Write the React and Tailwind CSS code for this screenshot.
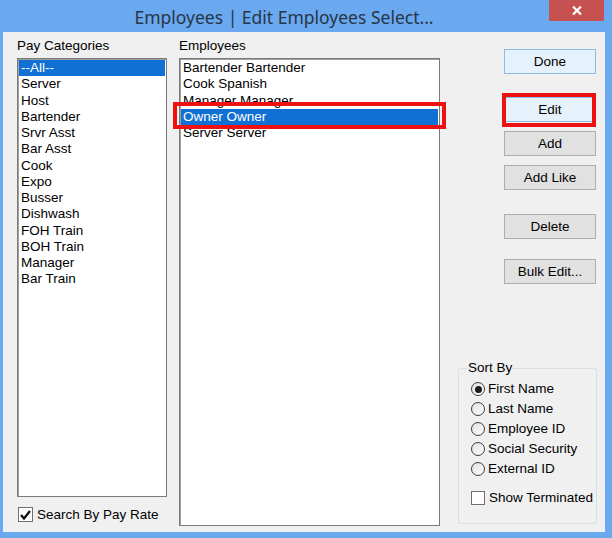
import React from 'react';

const payCategories = [
  '--All--', 'Server', 'Host', 'Bartender', 'Srvr Asst', 'Bar Asst', 'Cook',
  'Expo', 'Busser', 'Dishwash', 'FOH Train', 'BOH Train', 'Manager', 'Bar Train',
];

const employees = ['Bartender Bartender', 'Cook Spanish', 'Manager Manager', 'Owner Owner', 'Server Server'];

const sortOptions = ['First Name', 'Last Name', 'Employee ID', 'Social Security', 'External ID'];

const font = { fontFamily: '"Liberation Sans", Arial, sans-serif' };

function ListBox({ items, selected, className }) {
  return (
    <div className={`bg-white border border-[#7a7a7a] shadow-[inset_1px_1px_0_#a0a0a0] p-[1px] ${className}`}>
      {items.map((item) => (
        <div
          key={item}
          className={`h-[16.25px] leading-[16px] pl-[2px] whitespace-nowrap ${
            item === selected ? 'bg-[#1170d3] text-white' : 'text-black'
          }`}
        >
          {item}
        </div>
      ))}
    </div>
  );
}

function WinButton({ children, primary, className = '' }) {
  return (
    <button
      className={`w-[92px] h-[25px] ml-[46px] border text-[13.5px] text-black leading-none pt-[1px] ${
        primary ? 'bg-[#e5f1fb] border-[#8cbbe8]' : 'bg-[#e1e1e1] border-[#adadad]'
      } ${className}`}
      style={font}
    >
      {children}
    </button>
  );
}

function Radio({ checked }) {
  return (
    <span className="w-[14px] h-[14px] rounded-full border border-[#3c3c3c] bg-gradient-to-br from-[#e0e0e0] to-white flex items-center justify-center shrink-0">
      {checked && <span className="w-[7px] h-[7px] rounded-full bg-[#1a1a1a]" />}
    </span>
  );
}

export default function App() {
  return (
    <div className="w-[612px] h-[538px] bg-[#6aa8f0] flex flex-col pl-[3px] pr-[7px] pb-[6px] relative overflow-hidden" style={font}>
      {/* Title bar */}
      <div className="h-[32px] shrink-0 flex items-center justify-center pr-[40px] pt-[3px]">
        <span
          className="text-[17.5px] text-[#263646]"
          style={{ fontFamily: '"Noto Sans", "Open Sans", sans-serif' }}
        >
          Employees | Edit Employees Select...
        </span>
      </div>
      <div className="absolute left-[549px] top-0 w-[55px] h-[21px] bg-[#c75050] flex items-center justify-center">
        <svg width="10" height="9" viewBox="0 0 10 9">
          <path d="M1 0.5 L9 8.5 M9 0.5 L1 8.5" stroke="white" strokeWidth="2.2" />
        </svg>
      </div>

      {/* Client area */}
      <div className="flex-1 bg-[#f0f0f0] flex pl-[14px] text-[13.5px] text-black">
        {/* Pay categories column */}
        <div className="w-[150px] flex flex-col pt-[6px]">
          <div className="h-[20px] leading-[16px]">Pay Categories</div>
          <ListBox items={payCategories} selected="--All--" className="h-[439px]" />
          <div className="flex items-center mt-[10px] ml-[1px] h-[15px]">
            <span className="w-[15px] h-[15px] border border-[#707070] bg-white flex items-center justify-center shrink-0">
              <svg width="11" height="10" viewBox="0 0 11 10">
                <path d="M1 5 L4 8.5 L10 1" fill="none" stroke="#111" strokeWidth="2.3" />
              </svg>
            </span>
            <span className="ml-[4px] leading-[16px]">Search By Pay Rate</span>
          </div>
        </div>

        {/* Employees column */}
        <div className="w-[261px] ml-[12px] flex flex-col pt-[6px] relative">
          <div className="h-[20px] leading-[16px]">Employees</div>
          <ListBox items={employees} selected="Owner Owner" className="h-[468px]" />
          <div className="absolute left-[-6px] top-[70px] w-[273px] h-[27px] border-[4px] border-[#ee1111]" />
        </div>

        {/* Right column */}
        <div className="w-[139px] ml-[18px] flex flex-col pt-[17px] relative">
          <WinButton primary>Done</WinButton>
          <WinButton primary className="mt-[23px]">Edit</WinButton>
          <WinButton className="mt-[9px]">Add</WinButton>
          <WinButton className="mt-[9px]">Add Like</WinButton>
          <WinButton className="mt-[24px]">Delete</WinButton>
          <WinButton className="mt-[20px]">Bulk Edit...</WinButton>
          <div className="absolute left-[44px] top-[61px] w-[94px] h-[34px] border-[4px] border-[#ee1111]" />

          <fieldset className="mt-[76px] h-[164px] border border-[#d5dfe5] rounded-[3px]">
            <legend className="ml-[8px] px-[1px] leading-[16px]">Sort By</legend>
            <div className="pt-[3px] pl-[12px] flex flex-col">
              {sortOptions.map((opt, i) => (
                <div key={opt} className="h-[20px] flex items-center">
                  <Radio checked={i === 0} />
                  <span className="ml-[3px] leading-[16px]">{opt}</span>
                </div>
              ))}
              <div className="h-[20px] mt-[9px] flex items-center">
                <span className="w-[14px] h-[14px] border border-[#707070] bg-white shrink-0" />
                <span className="ml-[4px] leading-[16px]">Show Terminated</span>
              </div>
            </div>
          </fieldset>
        </div>
      </div>
    </div>
  );
}
